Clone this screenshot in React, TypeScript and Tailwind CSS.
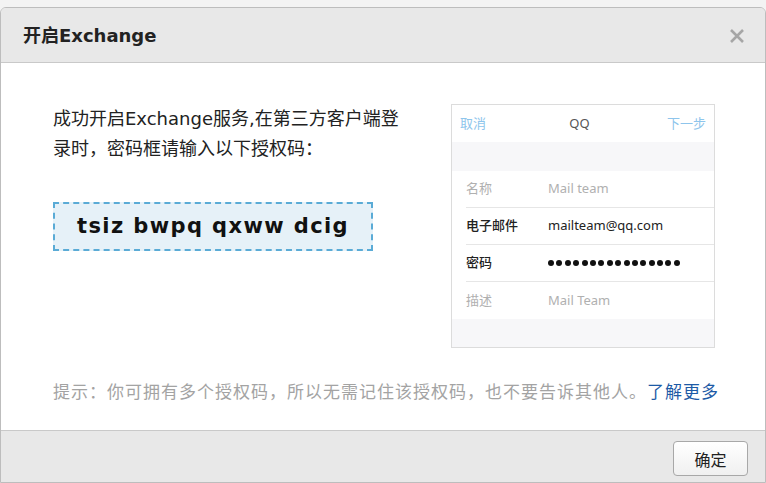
import React from 'react';

const cjk = "font-['DejaVu_Sans','Noto_Sans_CJK_SC',sans-serif]";
const phone = "font-['Noto_Sans','Noto_Sans_CJK_SC',sans-serif]";

const PhoneRow = ({ label, value, strong, last }: { label: string; value: string; strong?: boolean; last?: boolean }) => (
  <div className="pl-[14px] bg-white">
    <div className={`flex items-center h-[37px] ${last ? '' : 'border-b border-[#e6e6e6]'}`}>
      <span className={`w-[82px] text-[13px] ${strong ? 'text-[#222] font-medium' : 'text-[#b0b0b0]'}`}>{label}</span>
      <span className={`text-[13px] ${strong ? 'text-[#222]' : 'text-[#b0b0b0]'}`}>{value}</span>
    </div>
  </div>
);

const dots = Array.from({ length: 16 });

const App = () => {
  return (
    <div className="w-[766px] h-[483px] bg-[#f3f3f3] pt-[7px] overflow-hidden">
      <div className="h-[476px] flex flex-col border border-[#bdbdbd] rounded-t-[6px] overflow-hidden">
        {/* header */}
        <div className="h-[55px] bg-[#e8e8e8] border-b border-[#c9c9c9] pl-[22px] pr-[20px] flex items-center justify-between">
          <h2 className={`text-[18px] font-bold text-[#222] ${cjk}`}>开启Exchange</h2>
          <svg width="16" height="16" viewBox="0 0 16 16" className="mt-[1px]">
            <path d="M2 2 L14 14 M14 2 L2 14" stroke="#a6a6a6" strokeWidth="2.6" />
          </svg>
        </div>

        {/* body */}
        <div className="flex-1 bg-white pl-[52px] pt-[41px]">
          <div className="flex">
            <div className="w-[398px]">
              <p className={`w-[360px] text-[18px] leading-[30px] text-[#222] ${cjk}`}>
                成功开启Exchange服务,在第三方客户端登录时，密码框请输入以下授权码：
              </p>
              <div className="mt-[38px] w-[320px] h-[49px] bg-[#e6f1f8] border-2 border-dashed border-[#5aabd6] flex items-center justify-center">
                <span className="text-[21px] font-bold tracking-[1.4px] text-[#111] font-['DejaVu_Sans',sans-serif]">tsiz bwpq qxww dcig</span>
              </div>
            </div>

            {/* phone screenshot */}
            <div className={`w-[264px] h-[244px] border border-[#dcdcdc] bg-[#f7f7f9] flex flex-col ${phone}`}>
              <div className="h-[37px] bg-white flex items-center justify-between px-[8px] text-[13px]">
                <span className="text-[#8ec5ec]">取消</span>
                <span className="text-[#555] ml-[6px]">QQ</span>
                <span className="text-[#8ec5ec]">下一步</span>
              </div>
              <div className="h-[29px]" />
              <PhoneRow label="名称" value="Mail team" />
              <PhoneRow label="电子邮件" value="mailteam@qq.com" strong />
              <div className="pl-[14px] bg-white">
                <div className="flex items-center h-[37px] border-b border-[#e6e6e6]">
                  <span className="w-[82px] text-[13px] text-[#222] font-medium">密码</span>
                  <div className="flex gap-[2.4px]">
                    {dots.map((_, i) => (
                      <span key={i} className="w-[6px] h-[6px] rounded-full bg-[#111]" />
                    ))}
                  </div>
                </div>
              </div>
              <PhoneRow label="描述" value="Mail Team" last />
            </div>
          </div>

          <p className={`mt-[28px] text-[17px] leading-[30px] tracking-[1px] text-[#a3a3a3] font-['Noto_Sans_CJK_SC',sans-serif]`}>
            提示：你可拥有多个授权码，所以无需记住该授权码，也不要告诉其他人。<a className="text-[#1d5aa6]" href="#">了解更多</a>
          </p>
        </div>

        {/* footer */}
        <div className="h-[52px] bg-[#e8e8e8] border-t border-[#c9c9c9] flex items-start justify-end pt-[10px] pr-[17px]">
          <button className="w-[75px] h-[35px] rounded-[4px] border border-[#a8a8a8] bg-gradient-to-b from-white to-[#f0f0f0] text-[16px] text-[#222] font-['Noto_Sans_CJK_SC',sans-serif]">
            确定
          </button>
        </div>
      </div>
    </div>
  );
};

export default App;
